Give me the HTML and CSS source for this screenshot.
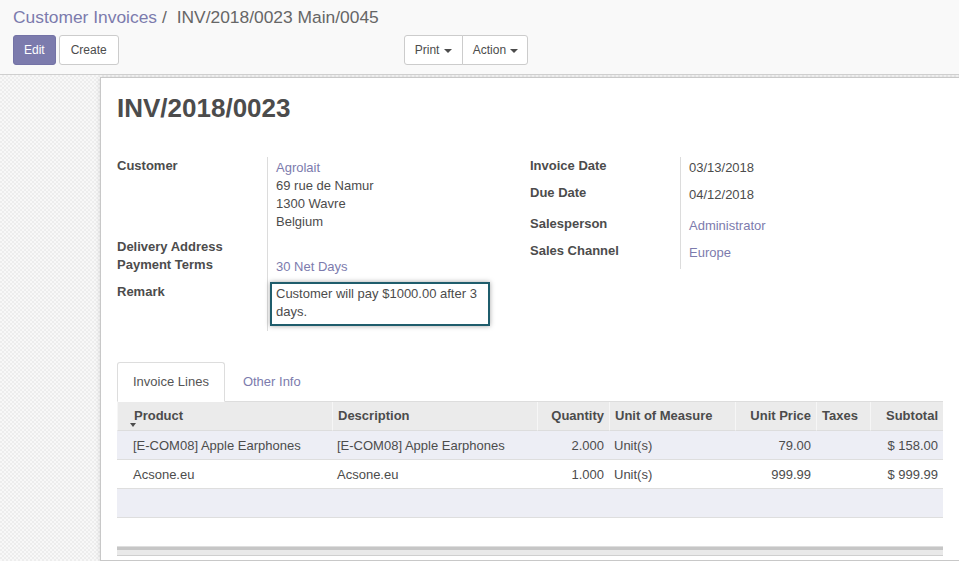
FILE: index.html
```html
<!DOCTYPE html>
<html lang="en">
<head>
<meta charset="utf-8">
<title>INV/2018/0023</title>
<link rel="stylesheet" href="styles.css">
</head>
<body>
<div class="cp">
  <ol class="breadcrumb">
    <li class="crumb-link">Customer Invoices</li>
    <li class="crumb-active">INV/2018/0023 Main/0045</li>
  </ol>
  <div class="cp-buttons">
    <button class="btn btn-primary">Edit</button>
    <button class="btn btn-default btn-create">Create</button>
    <div class="btn-group">
      <button class="btn btn-default btn-first">Print <span class="caret"></span></button>
      <button class="btn btn-default btn-last">Action <span class="caret"></span></button>
    </div>
  </div>
</div>
<div class="content">
  <div class="sheet">
    <h1 class="title">INV/2018/0023</h1>
    <div class="groups">
      <div class="group group-left">
        <div class="lbl">Customer</div>
        <div class="val val-address">
          <div class="link">Agrolait</div>
          <div>69 rue de Namur</div>
          <div>1300 Wavre</div>
          <div>Belgium</div>
        </div>
        <div class="lbl">Delivery Address</div>
        <div class="val val-empty"></div>
        <div class="lbl">Payment Terms</div>
        <div class="val val-terms"><span class="link">30 Net Days</span></div>
        <div class="lbl lbl-remark">Remark</div>
        <div class="val val-remark">
          <div class="remark">Customer will pay $1000.00 after 3 days.</div>
        </div>
      </div>
      <div class="group group-right">
        <div class="lbl">Invoice Date</div>
        <div class="val val-std">03/13/2018</div>
        <div class="lbl">Due Date</div>
        <div class="val val-date">04/12/2018</div>
        <div class="lbl">Salesperson</div>
        <div class="val val-std"><span class="link">Administrator</span></div>
        <div class="lbl">Sales Channel</div>
        <div class="val val-std"><span class="link">Europe</span></div>
      </div>
    </div>

    <div class="tabs">
      <div class="tab active">Invoice Lines</div>
      <div class="tab">Other Info</div>
    </div>
    <table class="lines">
      <colgroup>
        <col class="c-product">
        <col class="c-desc">
        <col class="c-qty">
        <col class="c-uom">
        <col class="c-price">
        <col class="c-taxes">
        <col class="c-sub">
      </colgroup>
      <thead>
        <tr>
          <th class="first sorted">Product</th>
          <th>Description</th>
          <th class="num">Quantity</th>
          <th>Unit of Measure</th>
          <th class="num">Unit Price</th>
          <th>Taxes</th>
          <th class="num">Subtotal</th>
        </tr>
      </thead>
      <tbody>
        <tr class="odd">
          <td class="first">[E-COM08] Apple Earphones</td>
          <td>[E-COM08] Apple Earphones</td>
          <td class="num">2.000</td>
          <td>Unit(s)</td>
          <td class="num">79.00</td>
          <td></td>
          <td class="num">$ 158.00</td>
        </tr>
        <tr>
          <td class="first">Acsone.eu</td>
          <td>Acsone.eu</td>
          <td class="num">1.000</td>
          <td>Unit(s)</td>
          <td class="num">999.99</td>
          <td></td>
          <td class="num">$ 999.99</td>
        </tr>
        <tr class="odd">
          <td class="first">&nbsp;</td><td></td><td></td><td></td><td></td><td></td><td></td>
        </tr>
        <tr>
          <td class="first">&nbsp;</td><td></td><td></td><td></td><td></td><td></td><td></td>
        </tr>
      </tbody>
      <tfoot>
        <tr><td colspan="7" class="foot"></td></tr>
      </tfoot>
    </table>
  </div>
</div>
</body>
</html>
```
FILE: styles.css
```css
* { box-sizing: border-box; }
html, body { margin: 0; padding: 0; }
body {
  font-family: "Liberation Sans", Arial, sans-serif;
  font-size: 13px;
  line-height: 18px;
  color: #4c4c4c;
  background: #fff;
  width: 959px;
  height: 561px;
  overflow: hidden;
  display: flex;
  flex-direction: column;
}

/* Control panel */
.cp {
  background: #f9f9f9;
  border-bottom: 1px solid #cfcfcf;
  padding: 5px 13px 9px;
  flex: none;
}
.breadcrumb {
  list-style: none;
  margin: 0;
  padding: 0;
  display: flex;
  font-size: 17.4px;
  line-height: 24px;
}
.crumb-link { color: #7c7bad; }
.crumb-active { color: #666; }
.crumb-active::before { content: "/\00a0"; padding: 0 5px; color: #666; }

.cp-buttons { display: flex; margin-top: 6px; height: 30px; }
.btn {
  font-family: inherit;
  font-size: 12px;
  height: 30px;
  line-height: 28px;
  padding: 0 10px;
  border: 1px solid #ccc;
  border-radius: 3px;
  background: #fff;
  color: #4c4c4c;
  margin: 0;
  white-space: nowrap;
}
.btn-primary { background: #7c7bad; border-color: #7473a6; color: #fff; }
.btn-create { margin-left: 3px; padding: 0 11px; }
.btn-group { display: flex; margin-left: 285px; }
.btn-first { border-radius: 3px 0 0 3px; }
.btn-last { border-radius: 0 3px 3px 0; margin-left: -1px; padding: 0 9px 0 10px; }
.caret {
  display: inline-block;
  width: 0;
  height: 0;
  border-top: 4px solid #4c4c4c;
  border-left: 4px solid transparent;
  border-right: 4px solid transparent;
  vertical-align: middle;
  margin-left: 1px;
}

/* Content */
.content {
  flex: 1;
  padding: 2px 0 0 100px;
  background-color: #f4f4f4;
  background-image: repeating-conic-gradient(#ededed 0% 25%, #f8f8f8 0% 50%);
  background-size: 4px 4px;
  overflow: hidden;
}
.sheet {
  width: 860px;
  min-height: 100%;
  background: #fff;
  border: 1px solid #c8c8c8;
  box-shadow: 0 0 5px rgba(0, 0, 0, 0.12);
  padding: 15px 16px 0;
}
.title {
  margin: 0;
  font-size: 26px;
  line-height: 31px;
  font-weight: bold;
  color: #4c4c4c;
}

.groups {
  display: flex;
  align-items: flex-start;
  margin-top: 33px;
}
.group {
  display: grid;
  grid-template-columns: 150px 1fr;
}
.group-left { width: 413px; }
.group-right { flex: 1; }
.lbl { font-weight: bold; }
.val {
  border-left: 1px solid #dcdcdc;
  padding-left: 8px;
  padding-top: 2px;
}
.link { color: #7c7bad; }
.val-address { padding-bottom: 7px; }
.val-empty { padding-top: 0; }
.val-terms { padding-bottom: 6px; }
.lbl-remark { padding-top: 1px; }
.val-remark { padding-top: 0; padding-bottom: 5px; }
.remark {
  width: 220px;
  margin-left: -6px;
  border: 2px solid #1f5d6c;
  padding: 1px 4px 3px;
  box-shadow: 0 0 5px rgba(0, 0, 0, 0.35);
  background: #fff;
}
.val-std { padding-bottom: 7px; }
.val-date { padding-bottom: 11px; }

/* Tabs */
.tabs {
  display: flex;
  border-bottom: 1px solid #ddd;
  margin-top: 31px;
}
.tab {
  padding: 10px 15px;
  line-height: 18px;
  border: 1px solid transparent;
  border-radius: 3px 3px 0 0;
  margin: 0 2px -1px 0;
  color: #7c7bad;
}
.tab.active {
  background: #fff;
  border-color: #ddd;
  border-bottom-color: transparent;
  color: #555;
}

/* Lines table */
.lines {
  width: 826px;
  table-layout: fixed;
  border-collapse: separate;
  border-spacing: 0;
}
.c-product { width: 215px; }
.c-desc { width: 205px; }
.c-qty { width: 72px; }
.c-uom { width: 126px; }
.c-price { width: 81px; }
.c-taxes { width: 54px; }
.c-sub { width: 73px; }
.lines th {
  background: #ebebeb;
  font-weight: bold;
  text-align: left;
  padding: 5px 5px 5px;
  border-left: 1px solid #f6f6f6;
  border-bottom: 1px solid #dddddd;
  white-space: nowrap;
  overflow: hidden;
}
.lines td {
  padding: 6px 5px 4px;
  border-bottom: 1px solid #dedede;
  white-space: nowrap;
  overflow: hidden;
}
.lines .num { text-align: right; }
.lines .first { padding-left: 16px; }
.lines tr.odd td { background: #edeef5; }
.lines th.sorted { position: relative; }
.lines th.sorted::after {
  content: "";
  position: absolute;
  left: 12px;
  top: 21px;
  border-top: 4px solid #4c4c4c;
  border-left: 3px solid transparent;
  border-right: 3px solid transparent;
}
.lines td.foot {
  height: 9px;
  padding: 0;
  background: #e9e9e9;
  border-top: 3px solid #c6c6c6;
  border-bottom: 1px solid #cfcfcf;
}
```
